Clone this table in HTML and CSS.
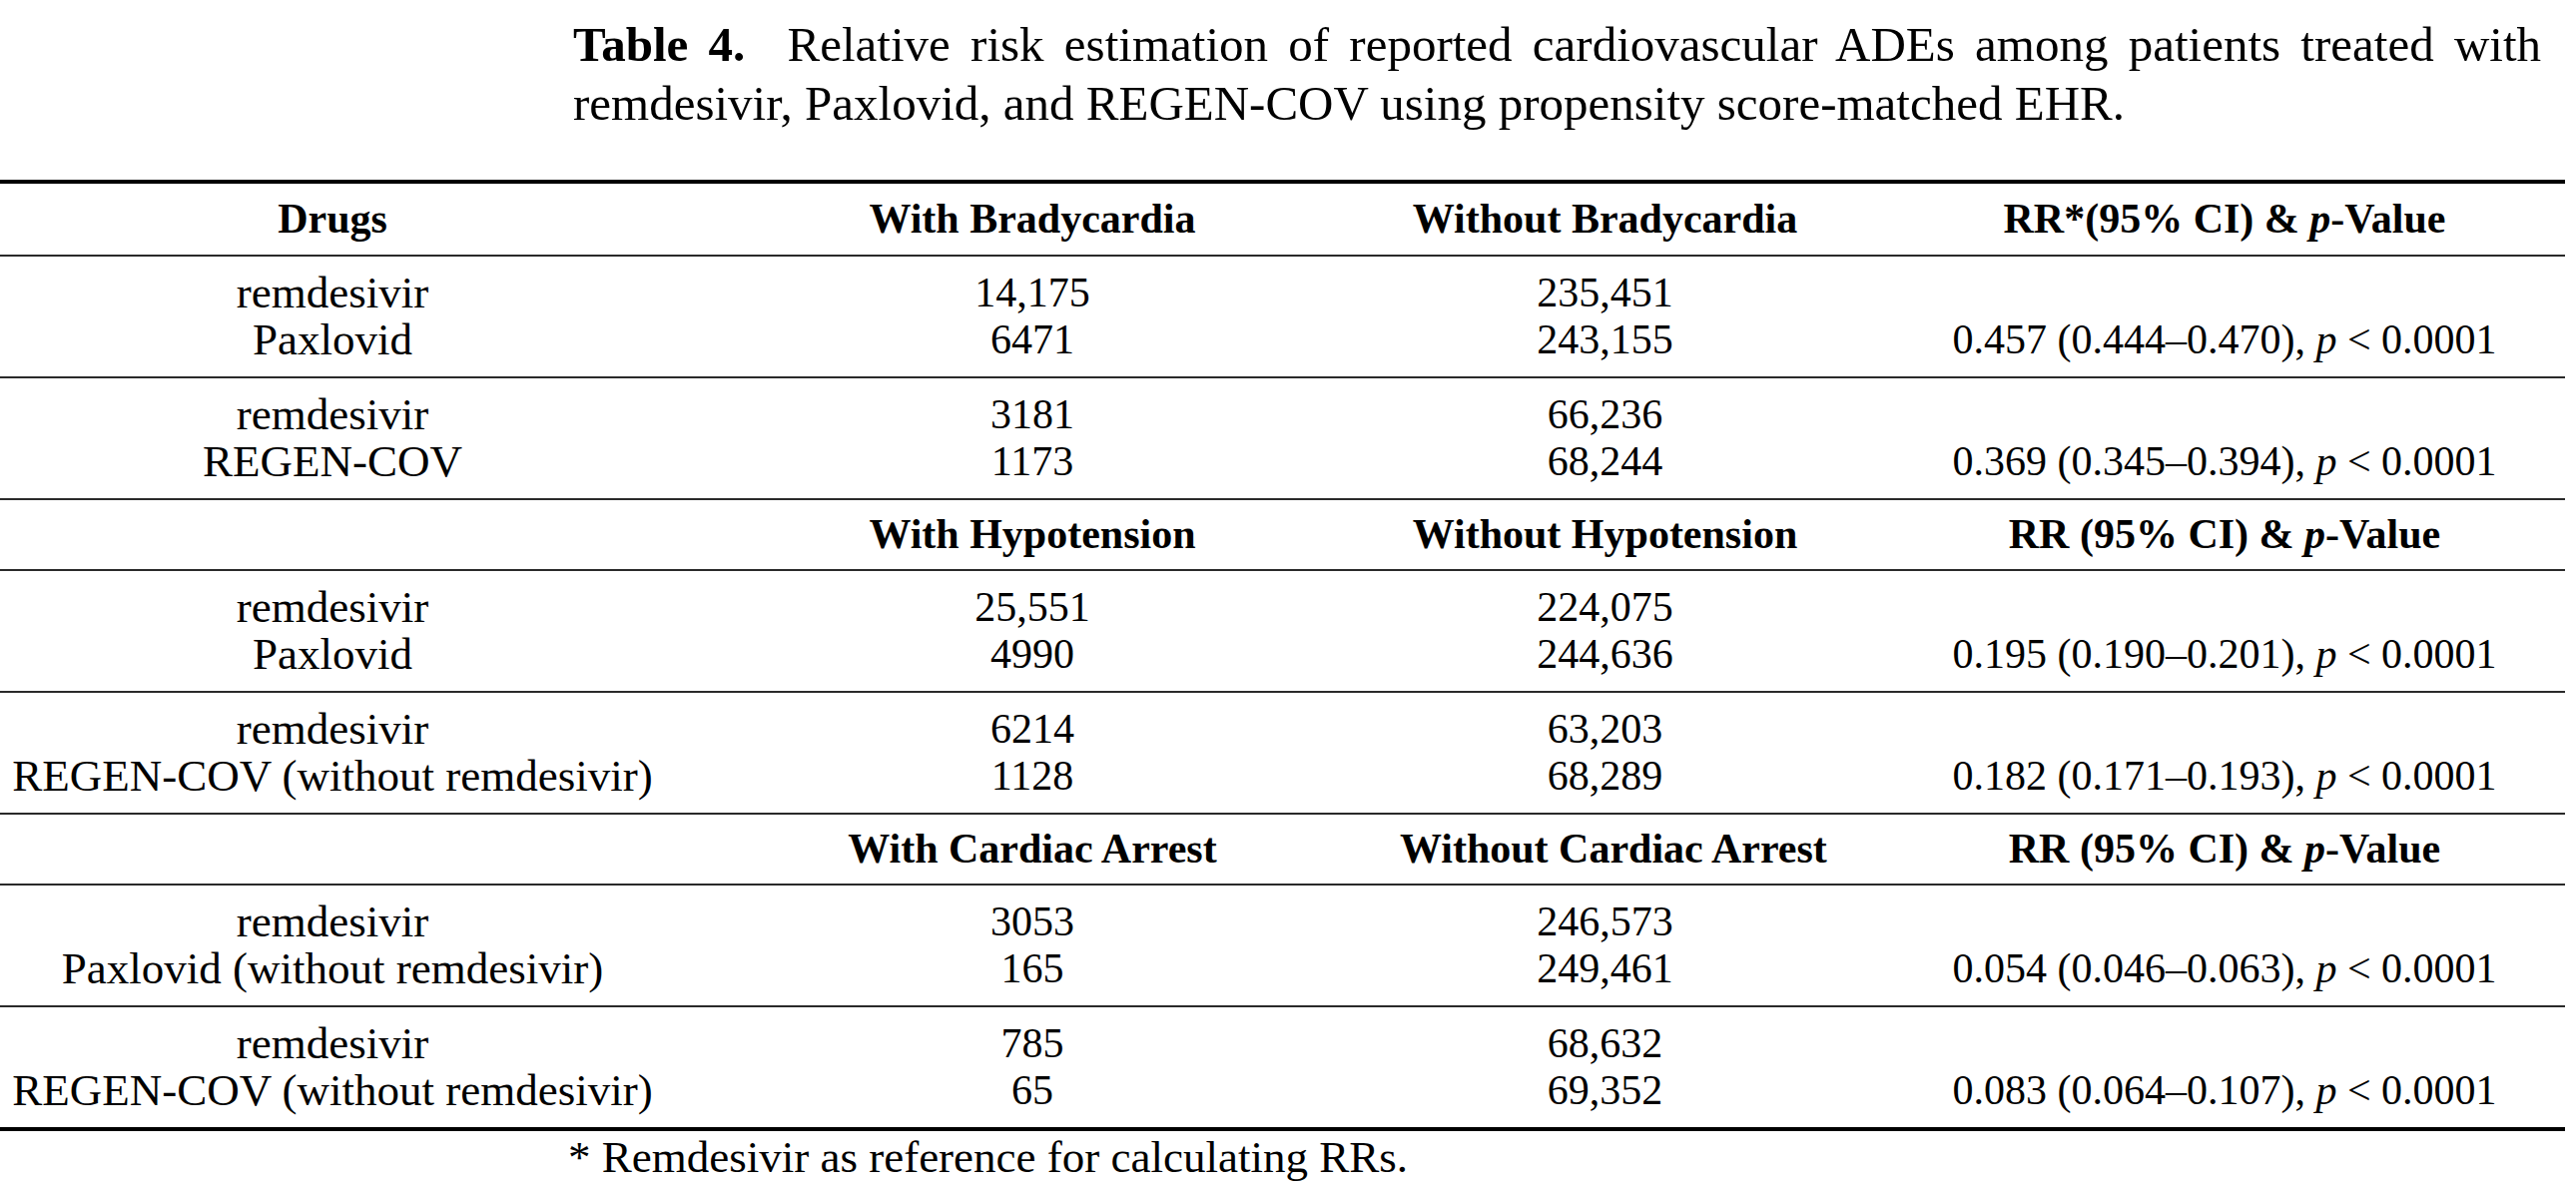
FILE: index.html
```html
<!DOCTYPE html>
<html lang="en">
<head>
<meta charset="utf-8">
<title>Table 4</title>
<link rel="stylesheet" href="styles.css">
</head>
<body>
<div class="page">
  <p class="caption"><b class="cap-label">Table 4.</b> <span class="cap-text">Relative risk estimation of reported cardiovascular ADEs among patients treated with remdesivir, Paxlovid, and REGEN-COV using propensity score-matched EHR.</span></p>

  <table class="rr-table">
    <colgroup>
      <col class="c-drug">
      <col class="c-with">
      <col class="c-without">
      <col class="c-rr">
    </colgroup>
    <thead>
      <tr class="head">
        <th class="drug">Drugs</th>
        <th>With Bradycardia</th>
        <th class="wo">Without Bradycardia</th>
        <th>RR*(95% CI) &amp; <i>p</i>-Value</th>
      </tr>
    </thead>
    <tbody class="grp">
      <tr class="l1"><td class="drug">remdesivir</td><td class="num">14,175</td><td class="num wo">235,451</td><td class="num"></td></tr>
      <tr class="l2"><td class="drug">Paxlovid</td><td class="num">6471</td><td class="num wo">243,155</td><td class="num">0.457 (0.444–0.470), <i>p</i> &lt; 0.0001</td></tr>
    </tbody>
    <tbody class="grp">
      <tr class="l1"><td class="drug">remdesivir</td><td class="num">3181</td><td class="num wo">66,236</td><td class="num"></td></tr>
      <tr class="l2"><td class="drug">REGEN-COV</td><td class="num">1173</td><td class="num wo">68,244</td><td class="num">0.369 (0.345–0.394), <i>p</i> &lt; 0.0001</td></tr>
    </tbody>
    <tbody class="grp">
      <tr class="sub">
        <th class="drug"></th>
        <th>With Hypotension</th>
        <th class="wo">Without Hypotension</th>
        <th>RR (95% CI) &amp; <i>p</i>-Value</th>
      </tr>
    </tbody>
    <tbody class="grp">
      <tr class="l1"><td class="drug">remdesivir</td><td class="num">25,551</td><td class="num wo">224,075</td><td class="num"></td></tr>
      <tr class="l2"><td class="drug">Paxlovid</td><td class="num">4990</td><td class="num wo">244,636</td><td class="num">0.195 (0.190–0.201), <i>p</i> &lt; 0.0001</td></tr>
    </tbody>
    <tbody class="grp">
      <tr class="l1"><td class="drug">remdesivir</td><td class="num">6214</td><td class="num wo">63,203</td><td class="num"></td></tr>
      <tr class="l2"><td class="drug">REGEN-COV (without remdesivir)</td><td class="num">1128</td><td class="num wo">68,289</td><td class="num">0.182 (0.171–0.193), <i>p</i> &lt; 0.0001</td></tr>
    </tbody>
    <tbody class="grp">
      <tr class="sub">
        <th class="drug"></th>
        <th>With Cardiac Arrest</th>
        <th class="wo">Without Cardiac Arrest</th>
        <th>RR (95% CI) &amp; <i>p</i>-Value</th>
      </tr>
    </tbody>
    <tbody class="grp">
      <tr class="l1"><td class="drug">remdesivir</td><td class="num">3053</td><td class="num wo">246,573</td><td class="num"></td></tr>
      <tr class="l2"><td class="drug">Paxlovid (without remdesivir)</td><td class="num">165</td><td class="num wo">249,461</td><td class="num">0.054 (0.046–0.063), <i>p</i> &lt; 0.0001</td></tr>
    </tbody>
    <tbody class="grp last">
      <tr class="l1"><td class="drug">remdesivir</td><td class="num">785</td><td class="num wo">68,632</td><td class="num"></td></tr>
      <tr class="l2"><td class="drug">REGEN-COV (without remdesivir)</td><td class="num">65</td><td class="num wo">69,352</td><td class="num">0.083 (0.064–0.107), <i>p</i> &lt; 0.0001</td></tr>
    </tbody>
  </table>

  <p class="footnote">* Remdesivir as reference for calculating RRs.</p>
</div>
</body>
</html>
```

FILE: styles.css
```css
html, body {
  margin: 0;
  padding: 0;
  background: #ffffff;
}

body {
  font-family: "Liberation Serif", "Times New Roman", serif;
  color: #000000;
}

.page {
  width: 2580px;
}

.caption {
  margin: 0 0 0 574px;
  padding-top: 15px;
  width: 1971px;
  font-size: 49px;
  line-height: 59px;
  text-align: justify;
}

.cap-label {
  margin-right: 22px;
}

.rr-table {
  margin-top: 47px;
  width: 2569px;
  table-layout: fixed;
  border-collapse: collapse;
  border-top: 4px solid #000000;
  border-bottom: 4px solid #000000;
}

.c-drug { width: 666px; }
.c-with { width: 736px; }
.c-without { width: 485px; }
.c-rr { width: 682px; }

.rr-table th,
.rr-table td {
  padding: 0;
  text-align: center;
  white-space: nowrap;
}

.rr-table th {
  font-size: 42px;
  font-weight: bold;
  line-height: 47px;
}

.rr-table th.wo,
.rr-table td.wo {
  padding-right: 74px;
}

.head th {
  height: 71px;
  vertical-align: middle;
}

.sub th {
  height: 69px;
  vertical-align: middle;
}

.grp {
  border-bottom: 2px solid #2a2a2a;
}

.grp.last {
  border-bottom: 0;
}

.rr-table thead {
  border-bottom: 2px solid #2a2a2a;
}

.rr-table td {
  line-height: 47px;
  height: 47px;
  vertical-align: middle;
}

.rr-table td.drug {
  font-size: 45px;
}

.rr-table td.num {
  font-size: 42px;
}

.l1 td {
  padding-top: 13px;
}

.l2 td {
  padding-bottom: 13px;
}

.footnote {
  margin: 3px 0 0 569px;
  font-size: 45px;
  line-height: 47px;
}
```
